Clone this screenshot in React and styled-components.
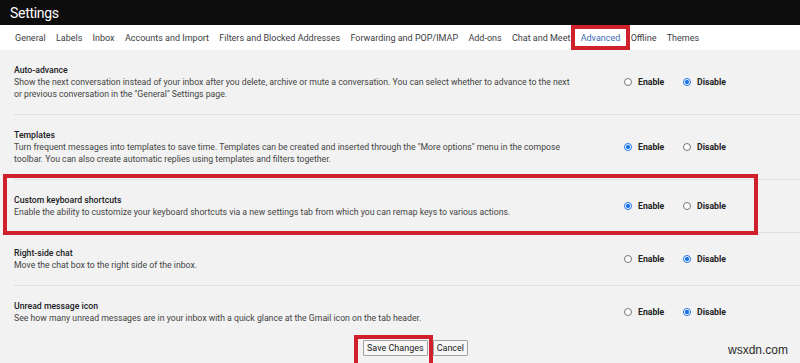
import styled, { createGlobalStyle } from "styled-components";

const GlobalStyle = createGlobalStyle`
    html, body {
        margin: 0;
        padding: 0;
    }
    body {
        background: #f2f2f2;
        font-family: Roboto, "Liberation Sans", sans-serif;
        overflow: hidden;
    }
`

const Page = styled.div`
    position: relative;
    width: 800px;
    height: 363px;
    overflow: hidden;
    background: #f2f2f2;
`

const TopBar = styled.header`
    height: 25px;
    background: #0d0d0d;
    display: flex;
    align-items: center;
    padding-left: 10px;
`

const Title = styled.h1`
    margin: 0;
    font-size: 14px;
    font-weight: 400;
    color: #fff;
    letter-spacing: -0.3px;
`

const Tabs = styled.nav`
    height: 25px;
    background: #fff;
    display: flex;
    align-items: stretch;
    gap: 10.3px;
    padding-left: 15px;
`

const Tab = styled.span`
    position: relative;
    display: flex;
    align-items: center;
    font-size: 9px;
    color: ${p => p.$active ? "#3d6cb3" : "#3c4043"};
`

const Mark = styled.span`
    position: absolute;
    border: 4px solid #d0202c;
    pointer-events: none;
`

const TabMark = styled(Mark)`
    top: 0;
    bottom: 0;
    left: -10px;
    right: -10px;
`

const List = styled.div`
    display: flex;
    flex-direction: column;
`

const Section = styled.section`
    position: relative;
    margin-left: 14px;
    padding: 14px 0;
    display: grid;
    grid-template-columns: 610px auto;
    align-items: center;
    border-bottom: 1px solid #e0e0e0;

    &:last-child {
        border-bottom: none;
    }
`

const RowMark = styled(Mark)`
    top: -6px;
    bottom: -3px;
    left: -11px;
    width: 747px;
`

const Info = styled.div`
    max-width: 560px;
`

const Name = styled.div`
    font-size: 8.7px;
    line-height: 12px;
    font-weight: 500;
    color: #202124;
`

const Desc = styled.div`
    font-size: 8.7px;
    line-height: 12px;
    color: #444;
`

const Options = styled.div`
    display: flex;
    align-items: center;
`

const Option = styled.label`
    display: flex;
    align-items: center;
    gap: 6px;
    width: ${p => p.$w}px;
    font-size: 8.7px;
    font-weight: 700;
    color: #222;
`

const Radio = styled.span`
    box-sizing: border-box;
    width: 8px;
    height: 8px;
    border-radius: 50%;
    border: 1px solid ${p => p.$on ? "#1a73e8" : "#767676"};
    background: ${p => p.$on ? "radial-gradient(circle, #1a73e8 0 2px, #fff 2.2px)" : "#fff"};
`

const Actions = styled.div`
    position: relative;
    display: flex;
    gap: 5px;
    padding: 2px 0 0 363px;
`

const ButtonWrap = styled.span`
    position: relative;
    display: flex;
`

const SaveMark = styled(Mark)`
    top: -5px;
    bottom: -14px;
    left: -9px;
    right: -5px;
`

const Button = styled.button`
    height: 16px;
    padding: 0 3px;
    font-family: Roboto, "Liberation Sans", sans-serif;
    font-size: 9px;
    color: #222;
    background: #f7f7f7;
    border: 1px solid #a3a3a3;
    border-radius: 1px;
`

const Watermark = styled.span`
    position: absolute;
    right: 12px;
    bottom: 6px;
    font-family: "Liberation Sans", sans-serif;
    font-size: 12px;
    color: #2a2a2a;
`

const tabs = ["General", "Labels", "Inbox", "Accounts and Import", "Filters and Blocked Addresses",
    "Forwarding and POP/IMAP", "Add-ons", "Chat and Meet", "Advanced", "Offline", "Themes"]

const settings = [
    {
        name: "Auto-advance",
        desc: "Show the next conversation instead of your inbox after you delete, archive or mute a conversation. You can select whether to advance to the next or previous conversation in the \"General\" Settings page.",
        on: false,
    },
    {
        name: "Templates",
        desc: "Turn frequent messages into templates to save time. Templates can be created and inserted through the \"More options\" menu in the compose toolbar. You can also create automatic replies using templates and filters together.",
        on: true,
    },
    {
        name: "Custom keyboard shortcuts",
        desc: "Enable the ability to customize your keyboard shortcuts via a new settings tab from which you can remap keys to various actions.",
        on: true,
        marked: true,
    },
    {
        name: "Right-side chat",
        desc: "Move the chat box to the right side of the inbox.",
        on: false,
    },
    {
        name: "Unread message icon",
        desc: "See how many unread messages are in your inbox with a quick glance at the Gmail icon on the tab header.",
        on: false,
    },
]

export default function App(){
    return(
        <Page>
            <GlobalStyle />
            <TopBar>
                <Title>Settings</Title>
            </TopBar>
            <Tabs>
                {tabs.map(t => (
                    <Tab key={t} $active={t === "Advanced"}>
                        {t}
                        {t === "Advanced" && <TabMark />}
                    </Tab>
                ))}
            </Tabs>
            <List>
                {settings.map(s => (
                    <Section key={s.name}>
                        {s.marked && <RowMark />}
                        <Info>
                            <Name>{s.name}</Name>
                            <Desc>{s.desc}</Desc>
                        </Info>
                        <Options>
                            <Option $w={59}><Radio $on={s.on} />Enable</Option>
                            <Option><Radio $on={!s.on} />Disable</Option>
                        </Options>
                    </Section>
                ))}
            </List>
            <Actions>
                <ButtonWrap>
                    <SaveMark />
                    <Button>Save Changes</Button>
                </ButtonWrap>
                <Button>Cancel</Button>
            </Actions>
            <Watermark>wsxdn.com</Watermark>
        </Page>
    )
}
